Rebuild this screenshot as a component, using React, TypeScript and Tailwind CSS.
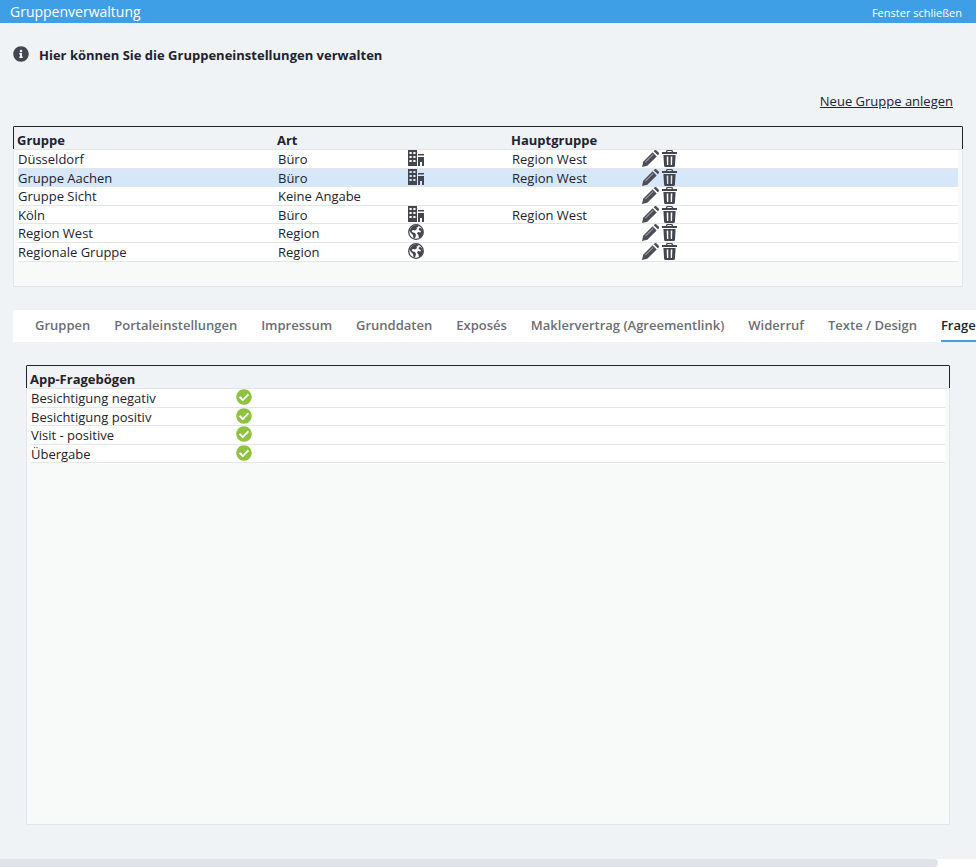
import { FaCheckCircle, FaInfoCircle } from 'react-icons/fa';

const groups = [
  { name: 'Düsseldorf', type: 'Büro', icon: 'office', parent: 'Region West' },
  { name: 'Gruppe Aachen', type: 'Büro', icon: 'office', parent: 'Region West', active: true },
  { name: 'Gruppe Sicht', type: 'Keine Angabe', icon: '', parent: '' },
  { name: 'Köln', type: 'Büro', icon: 'office', parent: 'Region West' },
  { name: 'Region West', type: 'Region', icon: 'globe', parent: '' },
  { name: 'Regionale Gruppe', type: 'Region', icon: 'globe', parent: '' },
];

const tabs = ['Gruppen', 'Portaleinstellungen', 'Impressum', 'Grunddaten', 'Exposés', 'Maklervertrag (Agreementlink)', 'Widerruf', 'Texte / Design'];

const forms = ['Besichtigung negativ', 'Besichtigung positiv', 'Visit - positive', 'Übergabe'];

const OfficeIcon = () => (
  <svg width="16" height="16" viewBox="0 0 16 16" className="-mt-[1.600px] text-[#44464f]" fill="currentColor">
    <path fillRule="evenodd" d="M0 0h9v16H0zM1.500 2v2h2.200V2zM5.300 2v2h2.200V2zM1.500 6v2h2.200V6zM5.300 6v2h2.200V6zM1.500 10v2h2.200v-2zM5.300 10v2h2.200v-2z" />
    <path d="M10 4h6v1.500h-6z" />
    <path d="M10 7h6v9h-2v-4h-2v4h-2z" />
  </svg>
);

const GlobeIcon = () => (
  <svg width="16" height="16" viewBox="0 0 16 16" className="-mt-[1.600px] text-[#44464f]" fill="currentColor">
    <circle cx="8" cy="8" r="7.300" fill="none" stroke="currentColor" strokeWidth="1.300" />
    <path d="M4 2.500 8 1l3 .5-1 1.500-1.500.5L9 5 7 6.500 5 6 3.500 7 5 8.500l2 .5 1 2-1 3.500-1.500-.5L5 11 2.500 8.500 1.500 6.500z" />
    <path d="M10.500 5 12 3.500 14.500 6 15 9l-1.500 3.500-2.500 2-.5-3L9 9.500l1-1.500 2.500.5L13 7l-1.500-.5z" />
  </svg>
);

const PencilIcon = () => (
  <svg width="17" height="17" viewBox="0 0 17 17" className="-mt-[0.600px] ml-px text-[#4c4e57]" fill="currentColor">
    <path d="M0 17l1.200-5.300L10.600 2.300l4.100 4.100-9.400 9.400z" />
    <path d="M11.700 1.200l.8-.8a1.400 1.400 0 0 1 2 0l2.100 2.100a1.400 1.400 0 0 1 0 2l-.8.800z" />
    <path d="M3 11.800l7.800-7.800.8.800-7.800 7.800z" fill="#9a9ca2" />
  </svg>
);

const TrashIcon = () => (
  <svg width="15" height="17" viewBox="0 0 16 17" preserveAspectRatio="none" className="-mt-[0.600px] text-[#44464f]" fill="currentColor">
    <path fillRule="evenodd" d="M5 0h6l1 2h4v2H0V2h4zM6 1l-.5 1h5L10 1z" />
    <path fillRule="evenodd" d="M1.500 5h13l-.7 10.500a1.500 1.500 0 0 1-1.500 1.500H3.700a1.500 1.500 0 0 1-1.500-1.500zM5 6.500l.3 8.500h1.400V6.500zM9.300 6.500V15h1.400l.3-8.500z" />
  </svg>
);

export default function App() {
  return (
    <div className="flex h-[867px] w-[976px] flex-col overflow-hidden bg-[#eff3f6] font-['Open_Sans',sans-serif] text-[13px] text-[#22222e]">
      <header className="flex h-[23px] shrink-0 items-center justify-between bg-[#3f9fe6] pl-[10px] pr-[14px] text-white">
        <span className="text-[14px] leading-[23px]">Gruppenverwaltung</span>
        <span className="pt-[2px] text-[11px] leading-[23px]">Fenster schließen</span>
      </header>

      <div className="flex flex-1 flex-col pl-[13px]">
        <div className="mt-[23px] flex h-[18px] items-center">
          <FaInfoCircle className="-mt-[2px] text-[16px] text-[#44464f]" />
          <span className="ml-[10px] pt-[1px] text-[13px] font-bold">Hier können Sie die Gruppeneinstellungen verwalten</span>
        </div>

        <div className="mt-[28px] flex w-[940px] justify-end">
          <a href="#neu" className="text-[13px] leading-[18px] underline">Neue Gruppe anlegen</a>
        </div>

        {/* Gruppen */}
        <section className="mt-[16px] h-[161px] w-[950px] border border-[#e3e5e8] border-t-[#22222e] bg-[#f8fafa]">
          <div className="-mx-px flex h-[22px] items-center border-x border-[#22222e] bg-[#eff3f6] pl-[3px] pt-[6px] font-bold">
            <span className="w-[260px]">Gruppe</span>
            <span className="w-[234px]">Art</span>
            <span>Hauptgruppe</span>
          </div>
          <div className="border-t border-[#e3e5e8] px-[4px]">
            {groups.map((g) => (
              <div key={g.name} className={`flex h-[18.600px] items-center border-b border-[#e3e5e8] ${g.active ? 'bg-[#d5e7f8]' : 'bg-white'}`}>
                <span className="w-[260px] pt-[2px]">{g.name}</span>
                <span className="w-[130px] pt-[2px]">{g.type}</span>
                <span className="flex w-[104px] items-center">
                  {g.icon === 'office' && <OfficeIcon />}
                  {g.icon === 'globe' && <GlobeIcon />}
                </span>
                <span className="w-[129px] pt-[2px]">{g.parent}</span>
                <span className="flex items-center gap-[3px]">
                  <PencilIcon />
                  <TrashIcon />
                </span>
              </div>
            ))}
          </div>
        </section>

        {/* Tabs */}
        <nav className="mt-[23px] flex h-[32px] gap-[24px] overflow-hidden bg-white pl-[22px] font-semibold text-[#6b6e75]">
          {tabs.map((t) => (
            <span key={t} className="shrink-0 leading-[31px]">{t}</span>
          ))}
          <span className="h-[33px] shrink-0 border-b-[3px] border-[#3f9fe6] leading-[31px] text-[#22222e]">Fragebögen</span>
        </nav>

        {/* App-Fragebögen */}
        <section className="ml-[13px] mt-[23px] h-[460px] w-[924px] border border-[#e3e5e8] border-t-[#22222e] bg-[#f8fafa]">
          <div className="-mx-px flex h-[22px] items-center border-x border-[#22222e] bg-[#eff3f6] pl-[3px] pt-[6px] font-bold">
            App-Fragebögen
          </div>
          <div className="border-t border-[#e3e5e8] px-[4px]">
            {forms.map((f) => (
              <div key={f} className="flex h-[18.600px] items-center border-b border-[#e3e5e8] bg-white">
                <span className="w-[205px] pt-[2px]">{f}</span>
                <FaCheckCircle className="-mt-[1.600px] text-[16px] text-[#8fc240]" />
              </div>
            ))}
          </div>
        </section>
      </div>

      {/* horizontal scrollbar */}
      <div className="flex h-[8px] shrink-0 bg-white">
        <div className="h-full w-[938px] rounded-r-full bg-[#e0e4ea]" />
      </div>
    </div>
  );
}
